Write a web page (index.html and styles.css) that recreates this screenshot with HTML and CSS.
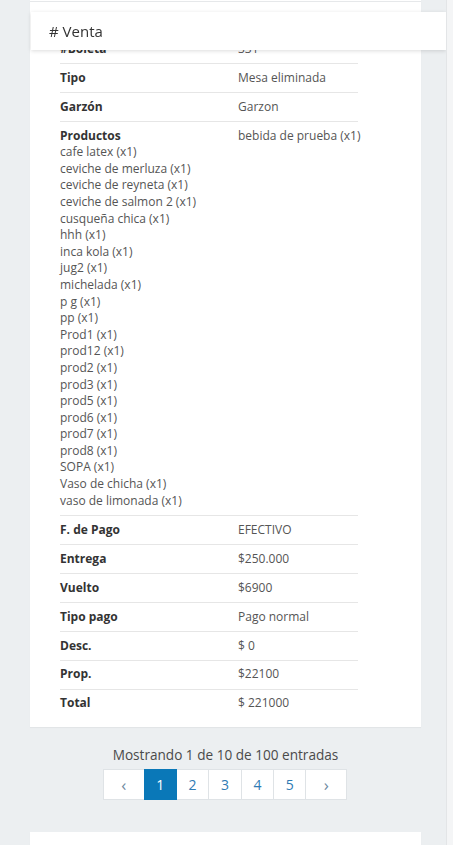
FILE: index.html
```html
<!DOCTYPE html>
<html lang="es">
<head>
<meta charset="UTF-8">
<title>Detalle de venta</title>
<link rel="stylesheet" href="styles.css">
</head>
<body>
<div class="page">
    <div class="card detail">
        <div class="card-top"></div>
        <table class="info">
            <tr><th>#Boleta</th><td>331</td></tr>
            <tr><th>Tipo</th><td>Mesa eliminada</td></tr>
            <tr><th>Garzón</th><td>Garzon</td></tr>
            <tr>
                <th>Productos
                    <span class="items">
                        cafe latex (x1)<br>
                        ceviche de merluza (x1)<br>
                        ceviche de reyneta (x1)<br>
                        ceviche de salmon 2 (x1)<br>
                        cusqueña chica (x1)<br>
                        hhh (x1)<br>
                        inca kola (x1)<br>
                        jug2 (x1)<br>
                        michelada (x1)<br>
                        p g (x1)<br>
                        pp (x1)<br>
                        Prod1 (x1)<br>
                        prod12 (x1)<br>
                        prod2 (x1)<br>
                        prod3 (x1)<br>
                        prod5 (x1)<br>
                        prod6 (x1)<br>
                        prod7 (x1)<br>
                        prod8 (x1)<br>
                        SOPA (x1)<br>
                        Vaso de chicha (x1)<br>
                        vaso de limonada (x1)
                    </span>
                </th>
                <td>bebida de prueba (x1)</td>
            </tr>
            <tr><th>F. de Pago</th><td>EFECTIVO</td></tr>
            <tr><th>Entrega</th><td>$250.000</td></tr>
            <tr><th>Vuelto</th><td>$6900</td></tr>
            <tr><th>Tipo pago</th><td>Pago normal</td></tr>
            <tr><th>Desc.</th><td>$ 0</td></tr>
            <tr><th>Prop.</th><td>$22100</td></tr>
            <tr><th>Total</th><td>$ 221000</td></tr>
        </table>
    </div>

    <div class="pager">
        <p class="count">Mostrando 1 de 10 de 100 entradas</p>
        <ul class="pagination">
            <li class="arrow">&lsaquo;</li>
            <li class="active">1</li>
            <li>2</li>
            <li>3</li>
            <li>4</li>
            <li>5</li>
            <li class="arrow">&rsaquo;</li>
        </ul>
    </div>

    <div class="card next"></div>
</div>

<div class="sticky-head"># Venta</div>
<div class="scroll-track"></div>
</body>
</html>
```

FILE: styles.css
```css
html, body {
    margin: 0;
    padding: 0;
    background-color: #eceff1;
    font-family: "Open Sans", "Liberation Sans", sans-serif;
    color: #555;
    overflow: hidden;
}
.page {
    width: 391px;
    margin-left: 30px;
}
.card {
    background: #fff;
    box-shadow: 0 1px 1px rgba(0,0,0,0.04);
}
.card-top {
    height: 1px;
    border-bottom: 1px solid #e6e8ea;
}
.detail {
    padding-bottom: 9px;
}
.info {
    margin: 32px 0 0 30px;
    width: 298px;
    table-layout: fixed;
    border-collapse: collapse;
    font-size: 12px;
    line-height: 16.6px;
}
.info th, .info td {
    border-top: 1px solid #e6e6e6;
    padding: 5.7px 0;
    text-align: left;
    vertical-align: top;
}
.info th {
    width: 178px;
    font-weight: 700;
    color: #333;
}
.info td {
    color: #555;
    white-space: nowrap;
}
.items {
    display: block;
    font-weight: 400;
    color: #555;
}
.pager {
    padding: 19px 0 32px;
    text-align: center;
}
.count {
    margin: 0;
    font-size: 13.6px;
    line-height: 18px;
    color: #4a4a4a;
}
.pagination {
    display: inline-flex;
    list-style: none;
    margin: 5px 0 0;
    padding: 0;
    background: #fff;
}
.pagination li {
    width: 33.4px;
    height: 31px;
    box-sizing: border-box;
    border: 1px solid #dfe3e6;
    margin-left: -1px;
    display: flex;
    align-items: center;
    justify-content: center;
    font-size: 14px;
    color: #2f7bb4;
    background: #fff;
}
.pagination li.arrow {
    width: 41.5px;
    font-size: 17px;
    color: #6f8aa0;
}
.pagination li.active {
    background: #0a78b8;
    border-color: #0a78b8;
    color: #fff;
    position: relative;
}
.next {
    height: 40px;
}
.sticky-head {
    position: fixed;
    top: 12px;
    left: 31px;
    width: 415px;
    height: 38px;
    box-sizing: border-box;
    padding-left: 18px;
    background: #fff;
    box-shadow: 0 1px 4px rgba(0,0,0,0.14);
    font-size: 15px;
    line-height: 38px;
    color: #333;
}
.scroll-track {
    position: fixed;
    top: 0;
    right: 0;
    width: 6px;
    height: 100%;
    background: #f4f5f6;
    border-left: 1px solid #e3e5e7;
}
```
